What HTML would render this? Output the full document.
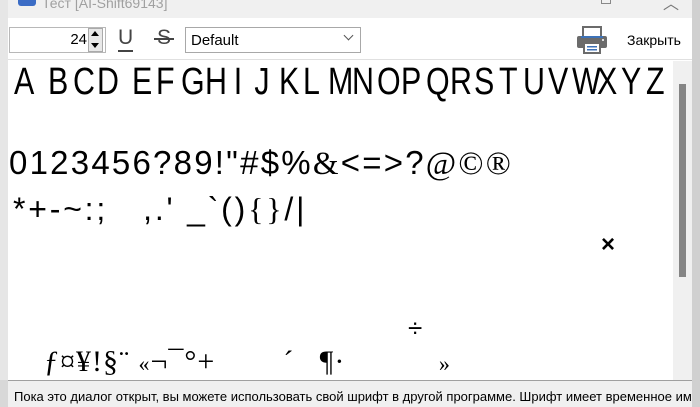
<!DOCTYPE html>
<html><head><meta charset="utf-8"><style>
*{margin:0;padding:0;box-sizing:border-box}
body{width:700px;height:407px;overflow:hidden;background:#c8c8c8;font-family:"Liberation Sans",sans-serif;position:relative}
.abs{position:absolute}
.row{position:absolute;display:flex;justify-content:space-between;align-items:baseline;color:#000;white-space:pre}
.r1 span{display:inline-block;width:20px;text-align:center;transform:scaleX(.8)}
</style></head><body>
<div class="abs" style="left:0;top:0;width:8px;height:407px;background:#e6e6e6"></div>
<div class="abs" style="left:8px;top:0;width:684px;height:407px;background:#fff"></div>
<div class="abs" style="left:8px;top:0;width:684px;height:18px;background:#f0f0f0;color:#a0a0a0;font-size:14px">
 <div class="abs" style="left:10px;top:-8px;width:18px;height:14px;background:#3b6cc5;border-radius:3px"></div>
 <div class="abs" style="left:34px;top:-5px">Тест [AI-Shift69143]</div>
 <div class="abs" style="left:593px;top:-6px;width:10px;height:10px;border:1px solid #888"></div>
 <div class="abs" style="left:655px;top:-10px;font-size:16px;color:#777">︿</div>
</div>
<div class="abs" style="left:8px;top:18px;width:684px;height:42px;background:#fff;border-bottom:1px solid #e0e0e0"></div>
<div class="abs" style="left:9px;top:27px;width:97px;height:26px;border:1px solid #b8b8b8;background:#fff"></div>
<div class="abs" style="left:60px;top:31px;width:27px;font-size:15px;text-align:right">24</div>
<div class="abs" style="left:88px;top:28px;width:15px;height:24px;background:#e8e8e8;border:1px solid #aaa"></div>
<div class="abs" style="left:91px;top:31px;width:0;height:0;border-left:4px solid transparent;border-right:4px solid transparent;border-bottom:5px solid #000"></div>
<div class="abs" style="left:91px;top:43px;width:0;height:0;border-left:4px solid transparent;border-right:4px solid transparent;border-top:5px solid #000"></div>
<div class="abs" style="left:118px;top:26px;font-size:21px;color:#444">U</div>
<div class="abs" style="left:118px;top:50px;width:15px;height:2px;background:#444"></div>
<div class="abs" style="left:157px;top:26px;font-size:21px;color:#444">S</div>
<div class="abs" style="left:154px;top:38px;width:20px;height:2px;background:#444"></div>
<div class="abs" style="left:185px;top:27px;width:176px;height:26px;border:1px solid #a8a8a8;background:#fff;font-size:15px;padding:4px 5px">Default</div>
<div class="abs" style="left:345px;top:32px;width:7px;height:7px;border-right:1px solid #555;border-bottom:1px solid #555;transform:rotate(45deg)"></div>
<svg class="abs" style="left:576px;top:25px" width="32" height="30" viewBox="0 0 32 30">
<rect x="7" y="2" width="18" height="10" fill="#fff" stroke="#6b6b6b" stroke-width="2"/>
<rect x="1" y="11" width="30" height="12" rx="2" fill="#6b6b6b"/>
<rect x="5" y="11" width="22" height="2" fill="#3d72b8"/>
<rect x="8" y="18" width="16" height="10" fill="#fff" stroke="#6b6b6b" stroke-width="2"/>
<rect x="11" y="21" width="10" height="1.5" fill="#3d72b8"/><rect x="11" y="24" width="10" height="1.5" fill="#3d72b8"/>
<circle cx="27" cy="15" r="1" fill="#fff"/>
</svg>
<div class="abs" style="left:627px;top:32px;font-size:14px;color:#000">Закрыть</div>
<div class="abs" style="left:673px;top:61px;width:19px;height:319px;background:#f0f0f0"></div>
<div class="abs" style="left:679px;top:84px;width:7px;height:193px;background:#858585"></div>
<div class="row r1" style="left:12px;top:61px;width:652px;font-size:38px">
<span>A</span><span style="margin-left:10px">B</span><span>C</span><span>D</span><span style="margin-left:10px">E</span><span>F</span><span>G</span><span>H</span><span>I</span><span>J</span><span>K</span><span>L</span><span>M</span><span>N</span><span>O</span><span>P</span><span>Q</span><span>R</span><span>S</span><span>T</span><span>U</span><span>V</span><span>W</span><span>X</span><span>Y</span><span>Z</span></div>
<div class="row" style="left:9px;top:144px;width:502px;font-size:33px">
<span>0</span><span>1</span><span>2</span><span>3</span><span>4</span><span>5</span><span>6</span><span>?</span><span>8</span><span>9</span><span>!</span><span>"</span><span>#</span><span>$</span><span>%</span><span style="font-family:'Liberation Serif',serif">&amp;</span><span>&lt;</span><span>=</span><span>&gt;</span><span>?</span><span style="font-family:'Liberation Serif',serif">@</span><span style="font-family:'Liberation Serif',serif">©</span><span style="font-family:'Liberation Serif',serif">®</span></div>
<div class="abs" style="left:13px;top:191px;font-size:32px;white-space:pre;letter-spacing:2.8px">*+-~:;   ,.' _`()<span style="font-family:'Liberation Serif',serif">{}</span>/|</div>
<div class="abs" style="left:601px;top:231px;font-size:24px;font-weight:bold">×</div>
<div class="abs" style="left:408px;top:313px;font-size:26px">÷</div>
<div class="abs" style="left:44px;top:345px;font-size:30px;white-space:pre;font-family:'Liberation Serif',serif;letter-spacing:1px">ƒ¤¥!§¨ <span style="font-size:22px">«</span>¬¯°+        ´   ¶·           <span style="font-size:22px">»</span></div>
<div class="abs" style="left:8px;top:380px;width:684px;height:27px;background:#f0f0f0;border-top:1px solid #a0a0a0"></div>
<div class="abs" style="left:0;top:380px;width:8px;height:27px;background:#d8d8d8"></div>
<div class="abs" style="left:14px;top:389px;font-size:13px;white-space:nowrap;width:678px;overflow:hidden">Пока это диалог открыт, вы можете использовать свой шрифт в другой программе. Шрифт имеет временное имя</div>
<div class="abs" style="left:692px;top:0;width:8px;height:407px;background:#d0d0d0"></div>
</body></html>
